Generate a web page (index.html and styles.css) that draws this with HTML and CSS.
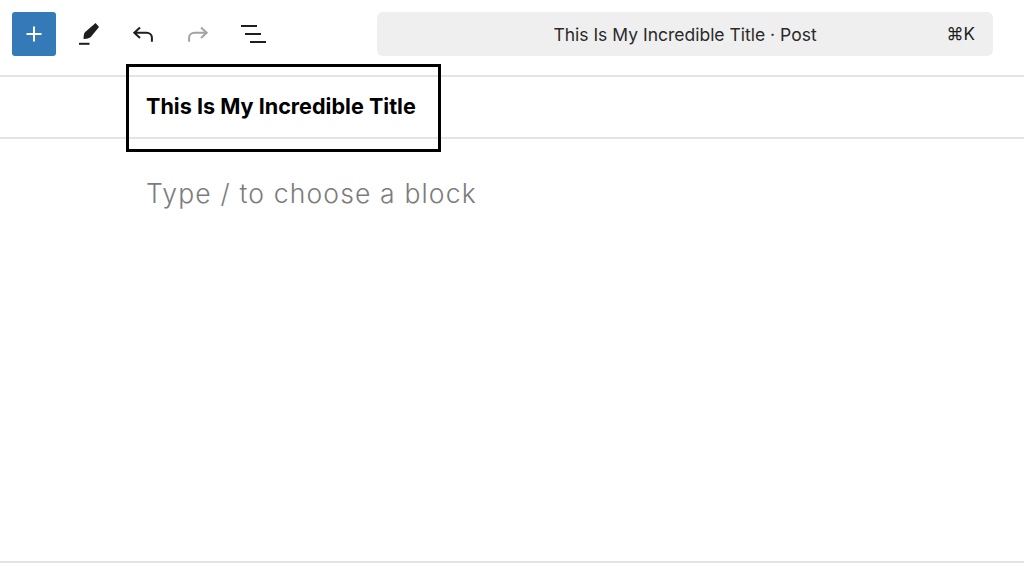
FILE: index.html
```html
<!DOCTYPE html>
<html lang="en">
<head>
    <meta charset="UTF-8">
    <meta name="viewport" content="width=device-width, initial-scale=1.0">
    <link rel="stylesheet" href="styles.css">
    <title>Editor</title>
</head>
<body>
    <div class="page">
        <header class="toolbar">
            <div class="tools">
                <button class="addBtn" aria-label="Add block">
                    <svg width="20" height="20" viewBox="0 0 20 20"><path d="M10 2.500v15M2.500 10h15" stroke="#fff" stroke-width="2" fill="none"/></svg>
                </button>
                <button class="toolBtn" aria-label="Tools">
                    <svg width="24" height="24" viewBox="0 0 24 24"><path d="M23 5 19.600 1 9.500 9.800c-1.100 1-1.700 2.400-1.800 4.400L7.500 17l2.900-.3c2-.2 3.500-.8 4.400-1.700z" fill="#1e1e1e"/><path d="M3 20.800h10.500v2H3z" fill="#1e1e1e"/></svg>
                </button>
                <button class="toolBtn" aria-label="Undo">
                    <svg width="24" height="24" viewBox="0 0 24 24"><path d="M9 5.500 3.300 10.800 9 16.100M3.800 10.800h11.700c3.200 0 5.400 2 5.400 4.800v4.200" stroke="#1e1e1e" stroke-width="2" fill="none"/></svg>
                </button>
                <button class="toolBtn" aria-label="Redo">
                    <svg width="24" height="24" viewBox="0 0 24 24"><path d="M15 5.500 20.700 10.800 15 16.100M20.200 10.800H8.500c-3.200 0-5.400 2-5.400 4.800v4.200" stroke="#a3a3a3" stroke-width="2" fill="none"/></svg>
                </button>
                <button class="toolBtn" aria-label="List view">
                    <svg width="26" height="24" viewBox="0 0 26 24"><path d="M1 4h16M5 12h16M10 20h16" stroke="#1e1e1e" stroke-width="2.200" fill="none"/></svg>
                </button>
            </div>
            <div class="commandBar">
                <span class="commandTitle">This Is My Incredible Title · Post</span>
                <span class="commandKey">⌘K</span>
            </div>
        </header>
        <div class="titleRow">
            <div class="titleText">This Is My Incredible Title</div>
            <div class="highlight"></div>
        </div>
        <main class="content">
            <p class="placeholder">Type / to choose a block</p>
        </main>
        <footer class="bottomBar"></footer>
    </div>
</body>
</html>
```

FILE: styles.css
```css
* {
    box-sizing: border-box;
}
html, body {
    margin: 0;
    height: 100%;
    background: #fff;
}
.page {
    height: 572px;
    display: flex;
    flex-direction: column;
    overflow: hidden;
    font-family: "Inter", "Liberation Sans", sans-serif;
    color: #1e1e1e;
}
.toolbar {
    height: 77px;
    padding: 12px 31px 0 12px;
    display: flex;
    align-items: flex-start;
    justify-content: space-between;
    border-bottom: 2px solid #e4e4e4;
}
.tools {
    display: flex;
    align-items: center;
    height: 44px;
}
button {
    border: none;
    background: none;
    padding: 0;
    display: flex;
    align-items: center;
    justify-content: center;
}
.addBtn {
    width: 44px;
    height: 44px;
    margin-right: 10px;
    background: #347ab8;
    border-radius: 3px;
}
.toolBtn {
    width: 44px;
    height: 44px;
    margin-right: 11px;
}
.commandBar {
    width: 616px;
    height: 44px;
    background: #efefef;
    border-radius: 6px;
    position: relative;
    display: flex;
    align-items: center;
    justify-content: center;
    font-size: 17.5px;
}
.commandTitle {
    color: #2a2a2a;
}
.commandKey {
    position: absolute;
    right: 18px;
    font-size: 17px;
}
.titleRow {
    height: 62px;
    padding-left: 146px;
    display: flex;
    align-items: center;
    border-bottom: 2px solid #e4e4e4;
    position: relative;
}
.titleText {
    font-size: 21.6px;
    font-weight: 700;
    color: #000;
    margin-top: -2px;
}
.highlight {
    position: absolute;
    left: 126px;
    top: -13px;
    width: 315px;
    height: 88px;
    border: 3px solid #000;
}
.content {
    flex: 1;
    padding: 36px 0 0 146px;
}
.placeholder {
    margin: 0;
    font-family: "Inter", sans-serif;
    font-weight: 300;
    font-size: 26.5px;
    line-height: 36px;
    letter-spacing: 1.15px;
    color: #7c7c7c;
}
.bottomBar {
    height: 11px;
    border-top: 2px solid #e4e4e4;
}
```
